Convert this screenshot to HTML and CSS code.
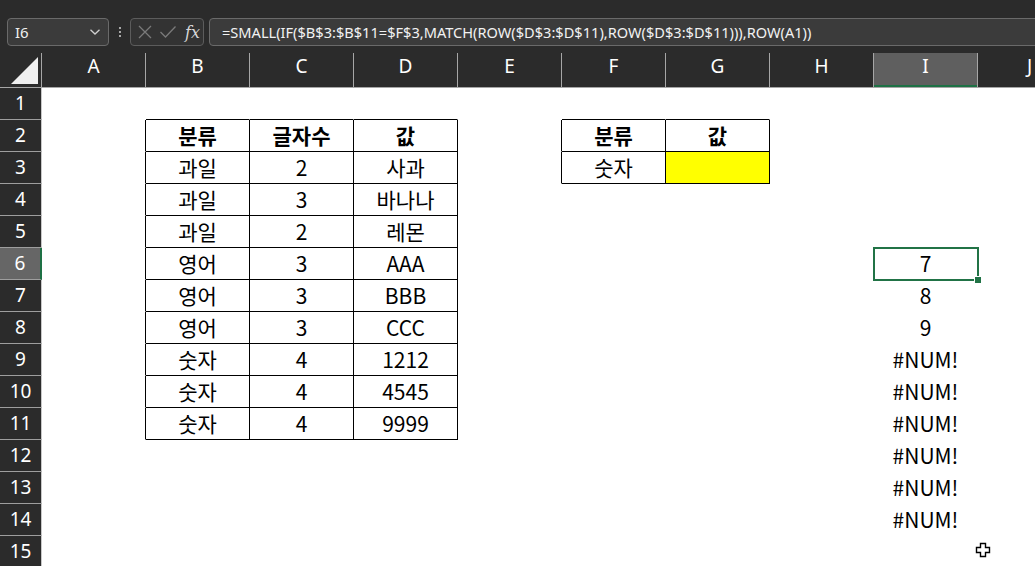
FILE: index.html
```html
<!DOCTYPE html>
<html lang="ko">
<head>
<meta charset="utf-8">
<title>Excel</title>
<link rel="stylesheet" href="styles.css">
</head>
<body>
<div class="app">
  <div class="topbar">
    <div class="namebox">
      <span class="name">I6</span>
      <svg class="chev" width="12" height="8" viewBox="0 0 12 8"><path d="M1.5 1.8 L6 6 L10.5 1.8" fill="none" stroke="#d0d0d0" stroke-width="1.3"/></svg>
    </div>
    <div class="dots"><i></i><i></i><i></i></div>
    <div class="fxbox">
      <svg width="16" height="16" viewBox="0 0 16 16"><path d="M2 2 L14 14 M14 2 L2 14" stroke="#7a7a7a" stroke-width="1.3" fill="none"/></svg>
      <svg width="18" height="16" viewBox="0 0 18 16"><path d="M1.5 8 L6.5 13 L16.5 2.5" stroke="#7a7a7a" stroke-width="1.3" fill="none"/></svg>
      <span class="fx">fx</span>
    </div>
    <div class="formula">=SMALL(IF($B$3:$B$11=$F$3,MATCH(ROW($D$3:$D$11),ROW($D$3:$D$11))),ROW(A1))</div>
  </div>

  <div class="colheads">
    <div class="corner"><svg width="42" height="35" viewBox="0 0 42 35"><polygon points="11,31 38,4 38,31" fill="#efefef"/></svg></div>
    <div class="ch">A</div><div class="ch">B</div><div class="ch">C</div><div class="ch">D</div><div class="ch">E</div>
    <div class="ch">F</div><div class="ch">G</div><div class="ch">H</div><div class="ch sel">I</div><div class="ch">J</div>
  </div>

  <div class="grid">
    <!-- row 1 -->
    <div class="rh">1</div>
    <div class="c"></div><div class="c bb"></div><div class="c bb"></div><div class="c bb"></div><div class="c"></div>
    <div class="c bb"></div><div class="c bb"></div><div class="c"></div><div class="c"></div><div class="c"></div>
    <!-- row 2 -->
    <div class="rh">2</div>
    <div class="c br"></div><div class="c br bb hd">분류</div><div class="c br bb hd">글자수</div><div class="c br bb hd">값</div><div class="c br"></div>
    <div class="c br bb hd">분류</div><div class="c br bb hd">값</div><div class="c"></div><div class="c"></div><div class="c"></div>
    <!-- row 3 -->
    <div class="rh">3</div>
    <div class="c br"></div><div class="c br bb">과일</div><div class="c br bb">2</div><div class="c br bb">사과</div><div class="c br"></div>
    <div class="c br bb">숫자</div><div class="c br bb yellow"></div><div class="c"></div><div class="c"></div><div class="c"></div>
    <!-- row 4 -->
    <div class="rh">4</div>
    <div class="c br"></div><div class="c br bb">과일</div><div class="c br bb">3</div><div class="c br bb">바나나</div><div class="c"></div>
    <div class="c"></div><div class="c"></div><div class="c"></div><div class="c"></div><div class="c"></div>
    <!-- row 5 -->
    <div class="rh">5</div>
    <div class="c br"></div><div class="c br bb">과일</div><div class="c br bb">2</div><div class="c br bb">레몬</div><div class="c"></div>
    <div class="c"></div><div class="c"></div><div class="c"></div><div class="c"></div><div class="c"></div>
    <!-- row 6 -->
    <div class="rh sel">6</div>
    <div class="c br"></div><div class="c br bb">영어</div><div class="c br bb">3</div><div class="c br bb">AAA</div><div class="c"></div>
    <div class="c"></div><div class="c"></div><div class="c"></div><div class="c active">7<span class="ring"></span><span class="handle"></span></div><div class="c"></div>
    <!-- row 7 -->
    <div class="rh">7</div>
    <div class="c br"></div><div class="c br bb">영어</div><div class="c br bb">3</div><div class="c br bb">BBB</div><div class="c"></div>
    <div class="c"></div><div class="c"></div><div class="c"></div><div class="c">8</div><div class="c"></div>
    <!-- row 8 -->
    <div class="rh">8</div>
    <div class="c br"></div><div class="c br bb">영어</div><div class="c br bb">3</div><div class="c br bb">CCC</div><div class="c"></div>
    <div class="c"></div><div class="c"></div><div class="c"></div><div class="c">9</div><div class="c"></div>
    <!-- row 9 -->
    <div class="rh">9</div>
    <div class="c br"></div><div class="c br bb">숫자</div><div class="c br bb">4</div><div class="c br bb">1212</div><div class="c"></div>
    <div class="c"></div><div class="c"></div><div class="c"></div><div class="c">#NUM!</div><div class="c"></div>
    <!-- row 10 -->
    <div class="rh">10</div>
    <div class="c br"></div><div class="c br bb">숫자</div><div class="c br bb">4</div><div class="c br bb">4545</div><div class="c"></div>
    <div class="c"></div><div class="c"></div><div class="c"></div><div class="c">#NUM!</div><div class="c"></div>
    <!-- row 11 -->
    <div class="rh">11</div>
    <div class="c br"></div><div class="c br bb">숫자</div><div class="c br bb">4</div><div class="c br bb">9999</div><div class="c"></div>
    <div class="c"></div><div class="c"></div><div class="c"></div><div class="c">#NUM!</div><div class="c"></div>
    <!-- row 12 -->
    <div class="rh">12</div>
    <div class="c"></div><div class="c"></div><div class="c"></div><div class="c"></div><div class="c"></div>
    <div class="c"></div><div class="c"></div><div class="c"></div><div class="c">#NUM!</div><div class="c"></div>
    <!-- row 13 -->
    <div class="rh">13</div>
    <div class="c"></div><div class="c"></div><div class="c"></div><div class="c"></div><div class="c"></div>
    <div class="c"></div><div class="c"></div><div class="c"></div><div class="c">#NUM!</div><div class="c"></div>
    <!-- row 14 -->
    <div class="rh">14</div>
    <div class="c"></div><div class="c"></div><div class="c"></div><div class="c"></div><div class="c"></div>
    <div class="c"></div><div class="c"></div><div class="c"></div><div class="c">#NUM!</div><div class="c"></div>
    <!-- row 15 -->
    <div class="rh">15</div>
    <div class="c"></div><div class="c"></div><div class="c"></div><div class="c"></div><div class="c"></div>
    <div class="c"></div><div class="c"></div><div class="c"></div><div class="c"></div><div class="c"></div>
  </div>

  <svg class="cursor" width="16" height="16" viewBox="0 0 16 16"><polygon points="5.5,1.5 10.5,1.5 10.5,5.5 14.5,5.5 14.5,10.5 10.5,10.5 10.5,14.5 5.5,14.5 5.5,10.5 1.5,10.5 1.5,5.5 5.5,5.5" fill="#fff" stroke="#000" stroke-width="1.4"/></svg>
</div>
</body>
</html>
```

FILE: styles.css
```css
html, body {
  margin: 0;
  padding: 0;
  width: 1035px;
  height: 566px;
  overflow: hidden;
  background: #ffffff;
}
.app {
  position: relative;
  width: 1035px;
  height: 566px;
  overflow: hidden;
  font-family: "Noto Sans", "Open Sans", sans-serif;
}
.topbar {
  height: 46px;
  box-sizing: border-box;
  padding: 18px 0 0 7px;
  background: #2b2b2b;
  display: flex;
  align-items: flex-start;
}
.namebox {
  flex: 0 0 102px;
  height: 28px;
  box-sizing: border-box;
  border: 1px solid #6a6a6a;
  border-radius: 4px;
  background: #3b3b3b;
  display: flex;
  align-items: center;
  justify-content: space-between;
  padding: 0 7px 0 7px;
  color: #f0f0f0;
  font-family: "Noto Sans", sans-serif;
  font-size: 15px;
}
.dots {
  flex: 0 0 21px;
  height: 28px;
  display: flex;
  flex-direction: column;
  align-items: center;
  justify-content: center;
  gap: 2px;
}
.dots i {
  display: block;
  width: 2px;
  height: 2px;
  background: #a8a8a8;
}
.fxbox {
  flex: 0 0 74px;
  height: 28px;
  box-sizing: border-box;
  border: 1px solid #5c5c5c;
  border-radius: 4px;
  background: #333333;
  display: flex;
  align-items: center;
  padding: 0 0 0 6px;
  gap: 6px;
}
.fx {
  font-family: "DejaVu Serif", "Liberation Serif", serif;
  font-style: italic;
  color: #d8d8d8;
  font-size: 16px;
  margin-left: 2px;
}
.formula {
  margin-left: 5px;
  flex: 0 0 900px;
  height: 28px;
  box-sizing: border-box;
  border: 1px solid #6a6a6a;
  border-radius: 4px;
  background: #3b3b3b;
  color: #f2f2f2;
  font-size: 14.6px;
  line-height: 26px;
  padding-left: 12px;
  white-space: nowrap;
}
.colheads {
  display: grid;
  grid-template-columns: 42px repeat(10, 104px);
  padding-top: 7px;
  background: #2b2b2b;
  color: #ffffff;
}
.corner {
  height: 35px;
  box-sizing: border-box;
  border-right: 1px solid #a6a6a6;
  border-bottom: 1px solid #a6a6a6;
}
.corner svg { display: block; }
.ch {
  height: 35px;
  box-sizing: border-box;
  border-right: 1px solid #a6a6a6;
  border-bottom: 1px solid #a6a6a6;
  text-align: center;
  font-size: 19px;
  line-height: 26px;
}
.ch.sel {
  background: #5f5f5f;
  box-shadow: inset 0 -2px 0 #1e7145;
}
.grid {
  display: grid;
  grid-template-columns: 42px repeat(10, 104px);
  grid-auto-rows: 32px;
}
.rh {
  background: #2b2b2b;
  color: #ffffff;
  box-sizing: border-box;
  border-right: 1px solid #c8c8c8;
  border-bottom: 1px solid #9e9e9e;
  text-align: center;
  font-size: 19px;
  line-height: 31px;
}
.rh.sel {
  background: #666666;
  border-right: 2px solid #1e7145;
}
.c {
  position: relative;
  box-sizing: border-box;
  border-right: 1px solid #ffffff;
  border-bottom: 1px solid #ffffff;
  text-align: center;
  font-family: "Noto Sans CJK KR", "Noto Sans", sans-serif;
  font-size: 21px;
  line-height: 31px;
  color: #000000;
}
.c.br { border-right-color: #000000; }
.c.bb { border-bottom-color: #000000; }
.c.hd { font-weight: bold; }
.c.yellow { background: #ffff00; }
.c.active { z-index: 2; }
.ring {
  position: absolute;
  left: -1px;
  top: -1px;
  right: -2px;
  bottom: -2px;
  border: 2px solid #217346;
}
.handle {
  position: absolute;
  right: -5px;
  bottom: -5px;
  width: 6px;
  height: 6px;
  background: #217346;
  border: 1px solid #ffffff;
}
.cursor {
  position: absolute;
  left: 975px;
  top: 542px;
}
```
